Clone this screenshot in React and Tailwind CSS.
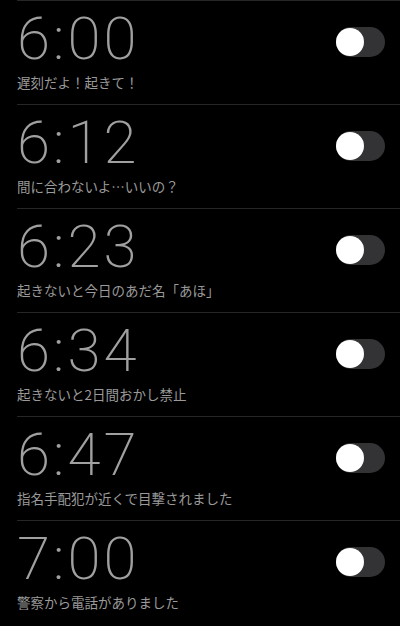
import React, { useState } from 'react';

const alarms = [
  { time: '6:00', label: '遅刻だよ！起きて！' },
  { time: '6:12', label: '間に合わないよ…いいの？' },
  { time: '6:23', label: '起きないと今日のあだ名「あほ」' },
  { time: '6:34', label: '起きないと2日間おかし禁止' },
  { time: '6:47', label: '指名手配犯が近くで目撃されました' },
  { time: '7:00', label: '警察から電話がありました' },
];

function Toggle({ on, onChange }) {
  return (
    <button
      onClick={onChange}
      className={`relative w-[49px] h-[30px] rounded-full shrink-0 ${on ? 'bg-[#34c759]' : 'bg-[#333335]'}`}
    >
      <span
        className={`absolute top-[1px] w-[28px] h-[28px] rounded-full bg-white ${on ? 'left-[20px]' : 'left-0'}`}
      />
    </button>
  );
}

export default function App() {
  const [enabled, setEnabled] = useState(alarms.map(() => false));

  const flip = (i) => {
    setEnabled((prev) => prev.map((v, j) => (j === i ? !v : v)));
  };

  return (
    <div className="w-[400px] h-[626px] bg-black overflow-hidden pl-[17px]">
      {alarms.map((a, i) => (
        <div key={a.time} className="flex border-t border-[#262626] h-[104px] pr-[15px]">
          <div className="flex-1 pt-[8px]">
            <div className="text-[60px] leading-none font-extralight tracking-[3px] text-[#a0a0a0] font-['Roboto',sans-serif]">
              {a.time}
            </div>
            <div className="mt-[3px] text-[13.5px] leading-[20px] text-[#9a9a9a] font-['Noto_Sans_CJK_JP',sans-serif]">
              {a.label}
            </div>
          </div>
          <div className="mt-[26px]">
            <Toggle on={enabled[i]} onChange={() => flip(i)} />
          </div>
        </div>
      ))}
    </div>
  );
}
